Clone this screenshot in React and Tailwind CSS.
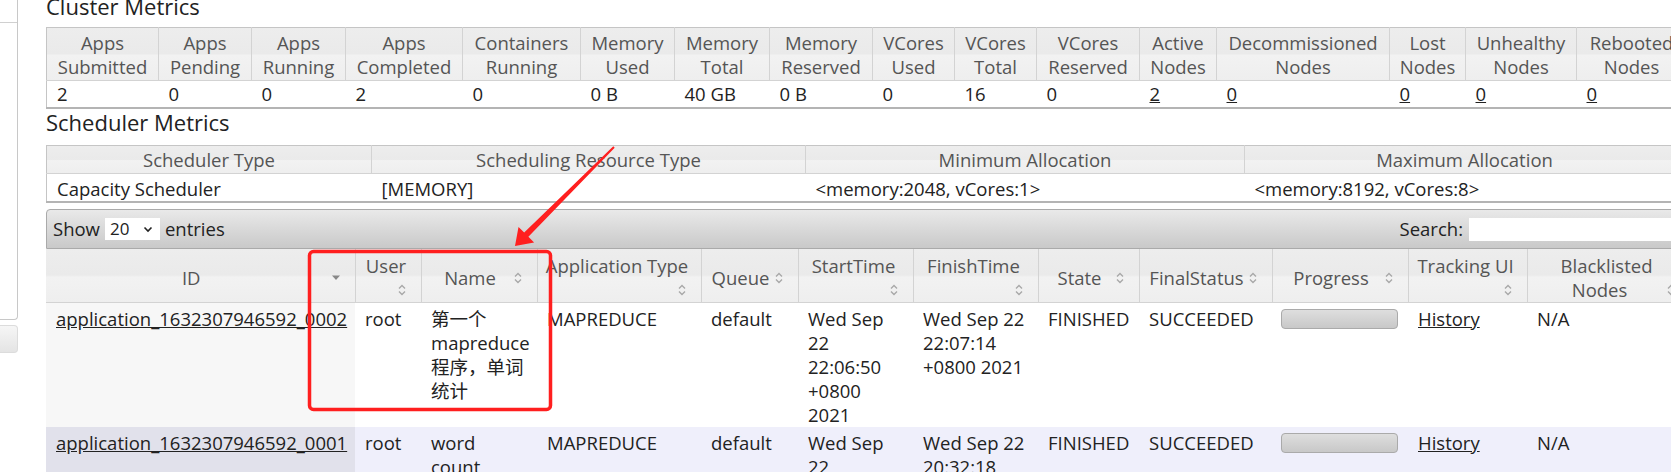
import { useState } from "react";

const clusterCols = [
    { label: "Apps Submitted", w: 112, value: "2" },
    { label: "Apps Pending", w: 93, value: "0" },
    { label: "Apps Running", w: 94, value: "0" },
    { label: "Apps Completed", w: 117, value: "2" },
    { label: "Containers Running", w: 118, value: "0" },
    { label: "Memory Used", w: 94, value: "0 B" },
    { label: "Memory Total", w: 95, value: "40 GB" },
    { label: "Memory Reserved", w: 103, value: "0 B" },
    { label: "VCores Used", w: 82, value: "0" },
    { label: "VCores Total", w: 82, value: "16" },
    { label: "VCores Reserved", w: 103, value: "0" },
    { label: "Active Nodes", w: 77, value: "2", link: true },
    { label: "Decommissioned Nodes", w: 173, value: "0", link: true },
    { label: "Lost Nodes", w: 76, value: "0", link: true },
    { label: "Unhealthy Nodes", w: 111, value: "0", link: true },
    { label: "Rebooted Nodes", w: 110, value: "0", link: true },
    { label: "Shutdown Nodes", w: 110, value: "0", link: true },
];

const schedulerCols = [
    { label: "Scheduler Type", w: 325, value: "Capacity Scheduler" },
    { label: "Scheduling Resource Type", w: 434, value: "[MEMORY]" },
    { label: "Minimum Allocation", w: 439, value: "<memory:2048, vCores:1>" },
    { label: "Maximum Allocation", w: 440, value: "<memory:8192, vCores:8>" },
];

const appCols = [
    { label: "ID", w: 309, sorted: true },
    { label: "User", w: 66 },
    { label: "Name", w: 116 },
    { label: "Application Type", w: 164 },
    { label: "Queue", w: 97 },
    { label: "StartTime", w: 115 },
    { label: "FinishTime", w: 125 },
    { label: "State", w: 101 },
    { label: "FinalStatus", w: 133 },
    { label: "Progress", w: 136 },
    { label: "Tracking UI", w: 119 },
    { label: "Blacklisted Nodes", w: 163 },
];

const apps = [
    {
        id: "application_1632307946592_0002",
        user: "root",
        name: "第一个mapreduce程序，单词统计",
        type: "MAPREDUCE",
        queue: "default",
        start: "Wed Sep 22 22:06:50 +0800 2021",
        finish: "Wed Sep 22 22:07:14 +0800 2021",
        state: "FINISHED",
        finalStatus: "SUCCEEDED",
    },
    {
        id: "application_1632307946592_0001",
        user: "root",
        name: "word count",
        type: "MAPREDUCE",
        queue: "default",
        start: "Wed Sep 22 20:31:52 +0800 2021",
        finish: "Wed Sep 22 20:32:18 +0800 2021",
        state: "FINISHED",
        finalStatus: "SUCCEEDED",
    },
];

const headerBg = "bg-[linear-gradient(to_bottom,#ededed_0%,#eaeaea_48%,#f2f2f2_52%,#eeeeee_100%)]";

const SortIcon = () => (
    <svg width="10" height="14" viewBox="0 0 10 14">
        <path d="M2 5.5 L5 2.5 L8 5.5 M2 8.5 L5 11.5 L8 8.5" fill="none" stroke="#a8a8a8" strokeWidth="1.4" />
    </svg>
);

const SortedIcon = () => (
    <svg width="10" height="6" viewBox="0 0 10 6">
        <path d="M1 0.5 L9 0.5 L5 5 Z" fill="#888" />
    </svg>
);

const Sidebar = () => {
    return (
        <div className="w-[18px] shrink-0 flex flex-col">
            <div className="h-[320px] border-r border-b border-[#c8c8c8] rounded-br-[4px]">
                <div className="h-[23px] border-b border-[#d0d0d0]"></div>
            </div>
            <div className="mt-[5px] h-[28px] border border-l-0 border-[#dcdcdc] rounded-r-[4px] bg-[linear-gradient(to_bottom,#f6f6f6,#e4e4e4)]"></div>
        </div>
    );
};

const Title = ({ children, className }) => (
    <h2 className={`text-[22px] leading-[28px] font-normal text-[#222] ${className}`}>{children}</h2>
);

const App = () => {
    const [entries, setEntries] = useState("20");

    const cell = "px-[10px] pt-[4px] pb-[0px] leading-[24px] align-top";

    return (
        <div className="relative w-[1671px] h-[472px] overflow-hidden bg-white text-[18.5px] text-[#222] font-['Open_Sans','Noto_Sans_CJK_SC',sans-serif]">
            <div className="flex">
                <Sidebar />
                <main className="ml-[28px] -mt-[8px] w-[1760px] shrink-0">
                    <Title className="mb-[7px]">Cluster Metrics</Title>
                    <table className="w-[1750px] table-fixed border-collapse border-t border-l border-[#c5c5c5]">
                        <colgroup>
                            {clusterCols.map((c) => (
                                <col key={c.label} style={{ width: c.w }} />
                            ))}
                        </colgroup>
                        <thead>
                            <tr className={headerBg}>
                                {clusterCols.map((c) => (
                                    <th key={c.label} className="border-r border-b border-[#d3d3d3] px-[6px] pt-[3px] pb-[1px] font-normal text-[#555] leading-[24px] text-center">
                                        {c.label}
                                    </th>
                                ))}
                            </tr>
                        </thead>
                        <tbody>
                            <tr className="border-b-2 border-[#b4b4b4]">
                                {clusterCols.map((c) => (
                                    <td key={c.label} className="px-[10px] py-[1px] leading-[24px]">
                                        {c.link ? <a href="#" className="underline text-[#222]">{c.value}</a> : c.value}
                                    </td>
                                ))}
                            </tr>
                        </tbody>
                    </table>

                    <Title className="-mt-[1px] mb-[9px]">Scheduler Metrics</Title>
                    <table className="w-[1638px] table-fixed border-collapse border-t border-l border-[#c5c5c5]">
                        <colgroup>
                            {schedulerCols.map((c) => (
                                <col key={c.label} style={{ width: c.w }} />
                            ))}
                        </colgroup>
                        <thead>
                            <tr className={headerBg}>
                                {schedulerCols.map((c) => (
                                    <th key={c.label} className="border-r border-b border-[#d3d3d3] px-[6px] pt-[2px] pb-[1px] font-normal text-[#555] leading-[24px] text-center">
                                        {c.label}
                                    </th>
                                ))}
                            </tr>
                        </thead>
                        <tbody>
                            <tr className="border-b-2 border-[#b4b4b4]">
                                {schedulerCols.map((c) => (
                                    <td key={c.label} className="px-[10px] pt-[3px] pb-[0px] leading-[24px]">
                                        {c.value}
                                    </td>
                                ))}
                            </tr>
                        </tbody>
                    </table>

                    <div className="mt-[6px] w-[1644px] h-[40px] flex items-center justify-between border border-[#aaaaaa] rounded-tl-[4px] bg-[linear-gradient(to_bottom,#e9e9e9_0%,#d9d9d9_50%,#c9c9c9_100%)] pl-[6px]">
                        <label className="flex items-center gap-[5px] leading-[24px]">
                            Show
                            <span className="relative flex items-center w-[55px] h-[22px] bg-white">
                                <select
                                    value={entries}
                                    onChange={(e) => setEntries(e.target.value)}
                                    className="appearance-none w-full h-full pl-[5px] text-[17px] leading-[22px] bg-transparent outline-none"
                                >
                                    <option>20</option>
                                    <option>40</option>
                                    <option>60</option>
                                </select>
                                <svg className="absolute right-[7px] top-[8px] pointer-events-none" width="10" height="7" viewBox="0 0 10 7">
                                    <path d="M1.5 1.5 L5 5 L8.5 1.5" fill="none" stroke="#222" strokeWidth="1.6" />
                                </svg>
                            </span>
                            entries
                        </label>
                        <label className="flex items-center gap-[6px] mr-[-30px]">
                            Search:
                            <input type="text" className="w-[250px] h-[23px] bg-white outline-none" />
                        </label>
                    </div>

                    <table className="w-[1644px] table-fixed border-collapse">
                        <colgroup>
                            {appCols.map((c) => (
                                <col key={c.label} style={{ width: c.w }} />
                            ))}
                        </colgroup>
                        <thead>
                            <tr className={headerBg}>
                                {appCols.map((c) => (
                                    <th key={c.label} className="border-r border-b border-[#d3d3d3] pl-[8px] pr-[12px] pt-[5px] pb-[0px] font-normal text-[#555] leading-[24px] text-center align-middle">
                                        <div className="flow-root">
                                            {c.label}
                                            <span className="float-right w-[14px] h-[24px] flex items-center justify-center">
                                                {c.sorted ? <SortedIcon /> : <SortIcon />}
                                            </span>
                                        </div>
                                    </th>
                                ))}
                            </tr>
                        </thead>
                        <tbody>
                            {apps.map((app, i) => {
                                const rowBg = i % 2 === 0 ? "bg-white" : "bg-[#efeffb]";
                                const idBg = i % 2 === 0 ? "bg-[#f7f7f7]" : "bg-[#e1e1eb]";
                                return (
                                    <tr key={app.id} className={rowBg}>
                                        <td className={`${idBg} ${cell}`}>
                                            <a href="#" className="underline text-[#222]">{app.id}</a>
                                        </td>
                                        <td className={cell}>{app.user}</td>
                                        <td className={cell}>{app.name}</td>
                                        <td className={cell}>{app.type}</td>
                                        <td className={cell}>{app.queue}</td>
                                        <td className={cell}>{app.start}</td>
                                        <td className={cell}>{app.finish}</td>
                                        <td className={cell}>{app.state}</td>
                                        <td className={cell}>{app.finalStatus}</td>
                                        <td className="px-[9px] pt-[4px] pb-[0px] leading-[24px] align-top">
                                            <div className="w-[117px] h-[20px] mt-[2px] border border-[#aaaaaa] rounded-[4px] bg-[linear-gradient(to_bottom,#dedede,#c8c8c8)]"></div>
                                        </td>
                                        <td className={cell}>
                                            <a href="#" className="underline text-[#222]">History</a>
                                        </td>
                                        <td className={cell}>N/A</td>
                                    </tr>
                                );
                            })}
                        </tbody>
                    </table>
                </main>
            </div>

            {/* red annotation drawn over the table */}
            <svg className="absolute inset-0 pointer-events-none" width="1671" height="472" viewBox="0 0 1671 472">
                <rect x="309.5" y="251.5" width="241" height="158" rx="4" fill="none" stroke="#ff1f1f" strokeWidth="3.5" />
                <polygon
                    points="613.3,146.3 614.7,147.7 528.4,236.8 534.1,242.5 515,246 518.5,226.9 524.2,232.6"
                    fill="#ff1f1f"
                />
            </svg>
        </div>
    );
};

export default App;
